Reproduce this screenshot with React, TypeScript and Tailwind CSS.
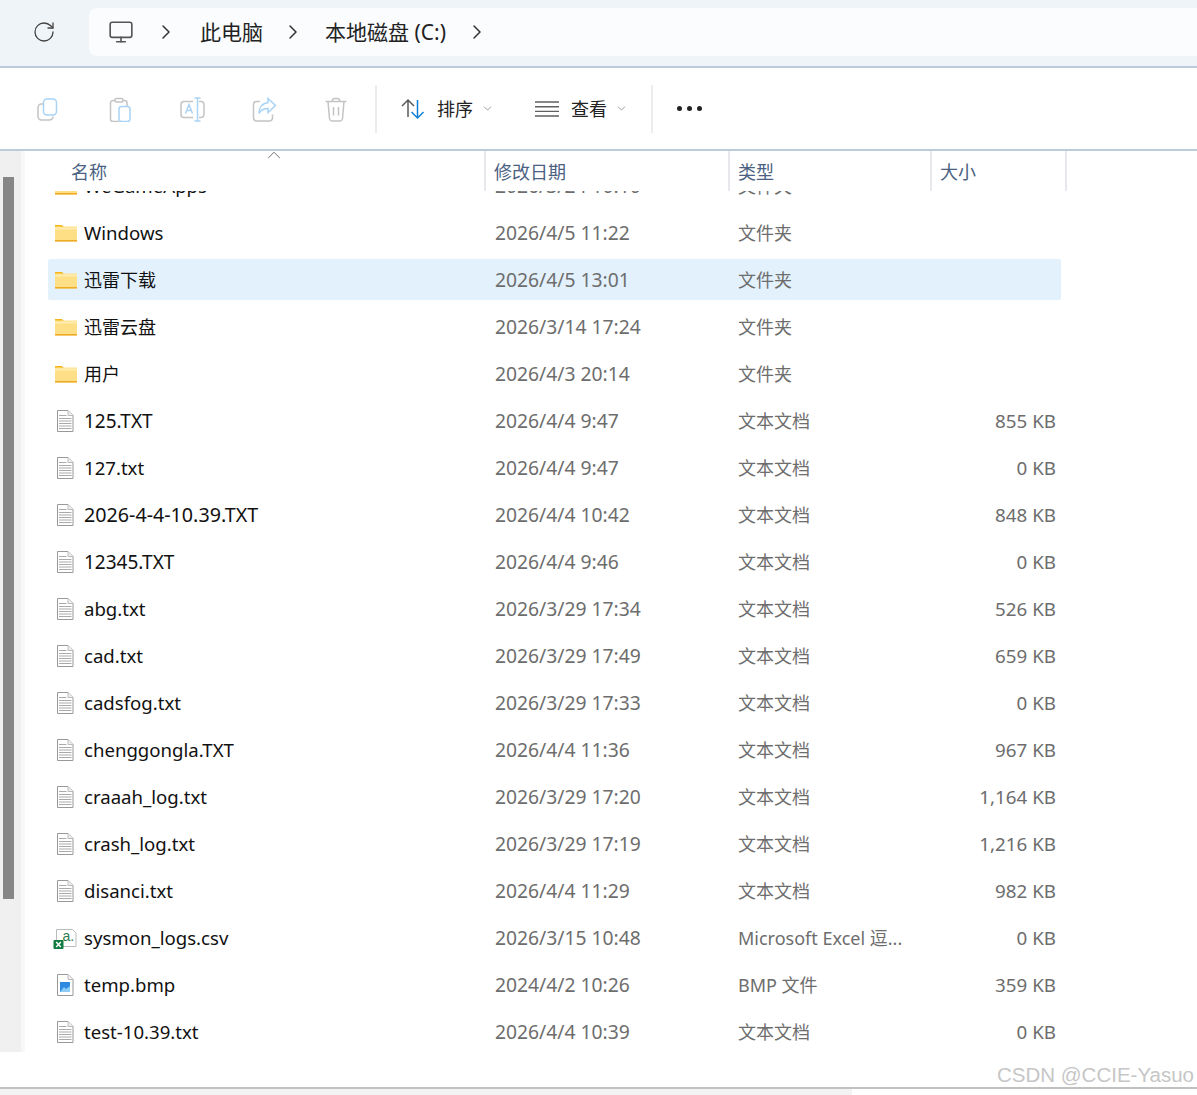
import { ChevronDown, ChevronRight, ChevronUp, Monitor, RotateCw } from "lucide-react";

const font = "font-['Noto_Sans','Noto_Sans_CJK_SC',sans-serif]";

type Kind = "folder" | "txt" | "csv" | "bmp";

const rows: { name: string; date: string; type: string; size?: string; kind: Kind; selected?: boolean; nameClass?: string }[] = [
  { name: "WeGameApps", date: "2026/3/24 10:10", type: "文件夹", kind: "folder" },
  { name: "Windows", date: "2026/4/5 11:22", type: "文件夹", kind: "folder" },
  { name: "迅雷下载", date: "2026/4/5 13:01", type: "文件夹", kind: "folder", selected: true, nameClass: "text-[18px]" },
  { name: "迅雷云盘", date: "2026/3/14 17:24", type: "文件夹", kind: "folder", nameClass: "text-[18px]" },
  { name: "用户", date: "2026/4/3 20:14", type: "文件夹", kind: "folder", nameClass: "text-[18px]" },
  { name: "125.TXT", date: "2026/4/4 9:47", type: "文本文档", size: "855 KB", kind: "txt", nameClass: "text-[19px]" },
  { name: "127.txt", date: "2026/4/4 9:47", type: "文本文档", size: "0 KB", kind: "txt" },
  { name: "2026-4-4-10.39.TXT", date: "2026/4/4 10:42", type: "文本文档", size: "848 KB", kind: "txt", nameClass: "text-[19.7px]" },
  { name: "12345.TXT", date: "2026/4/4 9:46", type: "文本文档", size: "0 KB", kind: "txt", nameClass: "text-[19px]" },
  { name: "abg.txt", date: "2026/3/29 17:34", type: "文本文档", size: "526 KB", kind: "txt" },
  { name: "cad.txt", date: "2026/3/29 17:49", type: "文本文档", size: "659 KB", kind: "txt" },
  { name: "cadsfog.txt", date: "2026/3/29 17:33", type: "文本文档", size: "0 KB", kind: "txt" },
  { name: "chenggongla.TXT", date: "2026/4/4 11:36", type: "文本文档", size: "967 KB", kind: "txt" },
  { name: "craaah_log.txt", date: "2026/3/29 17:20", type: "文本文档", size: "1,164 KB", kind: "txt" },
  { name: "crash_log.txt", date: "2026/3/29 17:19", type: "文本文档", size: "1,216 KB", kind: "txt" },
  { name: "disanci.txt", date: "2026/4/4 11:29", type: "文本文档", size: "982 KB", kind: "txt" },
  { name: "sysmon_logs.csv", date: "2026/3/15 10:48", type: "Microsoft Excel 逗...", size: "0 KB", kind: "csv" },
  { name: "temp.bmp", date: "2024/4/2 10:26", type: "BMP 文件", size: "359 KB", kind: "bmp" },
  { name: "test-10.39.txt", date: "2026/4/4 10:39", type: "文本文档", size: "0 KB", kind: "txt" },
];

function FolderIcon() {
  return (
    <svg width="24" height="20" viewBox="0 0 24 20">
      <path d="M0 2 h7 l2 2 h-9 z" fill="#f5b417" />
      <rect x="0" y="3.500" width="22" height="15" fill="#ffdf85" />
      <rect x="0" y="4.500" width="22" height="2" fill="#ffecb0" />
      <rect x="0" y="17" width="22" height="1.500" fill="#eeaa24" />
    </svg>
  );
}

function DocBase({ children }: { children?: React.ReactNode }) {
  return (
    <svg width="20" height="24" viewBox="0 0 20 24">
      <path d="M2.500 1.500 h10.500 l5 5 v16 h-15.500 z" fill="#fff" stroke="#999" />
      <path d="M13 1.500 v5 h5" fill="#eee" stroke="#bbb" />
      {children}
    </svg>
  );
}

function TxtIcon() {
  return (
    <DocBase>
      <path d="M4 6.500 h7.500 M4 9.500 h12.500 M4 12 h12.500 M4 14.500 h12.500 M4 17 h12.500 M4 19.500 h12.500" stroke="#aaa" strokeWidth="1" />
    </DocBase>
  );
}

function BmpIcon() {
  return (
    <DocBase>
      <rect x="5" y="9" width="10" height="10" fill="#2d8ae0" />
      <path d="M5 19 l4 -5 l2 2 l4 -3 v6 z" fill="#8ccbf5" />
    </DocBase>
  );
}

function CsvIcon() {
  return (
    <svg width="26" height="24" viewBox="0 0 26 24">
      <path d="M3.500 3.500 h16 l3.500 3.500 v13.500 h-19.500 z" fill="#fff" stroke="#bbb" />
      <text x="9.500" y="15" fontSize="14" fill="#2c7a4b" fontFamily="Liberation Sans, sans-serif">a.</text>
      <rect x="0.500" y="14" width="10" height="9" rx="1" fill="#107c41" />
      <path d="M3.200 16 l4.600 5 M7.800 16 l-4.600 5" stroke="#fff" strokeWidth="1.500" />
    </svg>
  );
}

function FileIcon({ kind }: { kind: Kind }) {
  if (kind === "folder") return <FolderIcon />;
  if (kind === "csv") return <CsvIcon />;
  if (kind === "bmp") return <BmpIcon />;
  return <TxtIcon />;
}

const grey = "#c4c4c4";
const blue = "#a9d3f5";

function ToolIcon({ children }: { children: React.ReactNode }) {
  return (
    <div className="flex h-[44px] w-[72px] items-center justify-center">
      <svg width="26" height="26" viewBox="0 0 26 26" fill="none" strokeWidth="1.500">
        {children}
      </svg>
    </div>
  );
}

function Toolbar() {
  return (
    <div className="flex h-[83px] shrink-0 items-center border-b-2 border-[#bdccdb] bg-white pl-[12px]">
      <ToolIcon>
        <path d="M8 8 h-1.500 a3.500 3.500 0 0 0 -3.500 3.500 v9 a3.500 3.500 0 0 0 3.500 3.500 h8 a3.500 3.500 0 0 0 3.500 -3.500" stroke={grey} />
        <rect x="8.500" y="3" width="13" height="16" rx="3.500" stroke={blue} />
      </ToolIcon>
      <ToolIcon>
        <path d="M8 4.500 h-2 a2.500 2.500 0 0 0 -2.500 2.500 v16 a2.500 2.500 0 0 0 2.500 2.500 h6" stroke={grey} />
        <path d="M16 4.500 h1.500 a2.500 2.500 0 0 1 2.500 2.500 v3" stroke={grey} />
        <rect x="8" y="2.500" width="8" height="3.500" rx="1.500" stroke={grey} />
        <rect x="12" y="10.500" width="11" height="15" rx="2.500" stroke={blue} />
      </ToolIcon>
      <ToolIcon>
        <path d="M14 5.500 h-9 a3 3 0 0 0 -3 3 v10 a3 3 0 0 0 3 3 h9" stroke={grey} />
        <path d="M20 5.500 h2 a3 3 0 0 1 3 3 v10 a3 3 0 0 1 -3 3 h-2" stroke={grey} />
        <path d="M6.500 17.500 l3.500 -9 l3.500 9 M8 14.500 h4.500" stroke={blue} />
        <path d="M15.500 2 h6 M18.500 2 v23 M15.500 25 h6" stroke={blue} />
      </ToolIcon>
      <ToolIcon>
        <path d="M9 5.500 h-3.500 a3 3 0 0 0 -3 3 v13.500 a3 3 0 0 0 3 3 h13 a3 3 0 0 0 3 -3 v-3.500" stroke={grey} />
        <path d="M17 2.500 l7.500 7 l-7.500 7 v-4 c-4 0 -7 1 -9 5 c0 -6 3 -10 9 -11 z" stroke={blue} />
      </ToolIcon>
      <ToolIcon>
        <path d="M2.500 5.500 h21 M9.500 5.500 v-1 a2 2 0 0 1 2 -2 h3 a2 2 0 0 1 2 2 v1" stroke={grey} />
        <path d="M5 5.500 l1.500 17 a3 3 0 0 0 3 2.500 h7 a3 3 0 0 0 3 -2.500 l1.500 -17 M10.500 11 v8.500 M15.500 11 v8.500" stroke={grey} />
      </ToolIcon>
      <div className="ml-[3px] h-[48px] w-[2px] bg-[#ececec]" />
      <div className="ml-[23px] flex items-center">
        <svg width="26" height="24" viewBox="0 0 26 24" fill="none" strokeWidth="1.500">
          <path d="M8 20 v-17 M2 9 l6 -6 l6 6" stroke="#5a5a5a" />
          <path d="M17.500 3 v18 M11.500 15 l6 6 l6 -6" stroke="#0f7fd6" />
        </svg>
        <span className="ml-[11px] text-[18px] leading-none text-[#222]">排序</span>
        <ChevronDown className="ml-[8px] text-[#888]" size={13} strokeWidth={1.500} />
      </div>
      <div className="ml-[41px] flex items-center">
        <svg width="24" height="16" viewBox="0 0 24 16" fill="none" stroke="#606060" strokeWidth="1.400">
          <path d="M0 1 h24 M0 5.700 h24 M0 10.400 h24 M0 15 h24" />
        </svg>
        <span className="ml-[12px] text-[18px] leading-none text-[#222]">查看</span>
        <ChevronDown className="ml-[8px] text-[#888]" size={13} strokeWidth={1.500} />
      </div>
      <div className="ml-[23px] h-[48px] w-[2px] bg-[#ececec]" />
      <div className="ml-[24px] flex items-center gap-[5px]">
        <span className="size-[5px] rounded-full bg-[#222]" />
        <span className="size-[5px] rounded-full bg-[#222]" />
        <span className="size-[5px] rounded-full bg-[#222]" />
      </div>
    </div>
  );
}

function AddressBar() {
  const crumb = "text-[21px] leading-none text-[#222]";
  return (
    <div className="flex h-[68px] shrink-0 items-center border-b-2 border-[#bdccdb] bg-[#eff4f9] pb-[2px] pl-[32px]">
      <RotateCw className="text-[#444]" size={24} strokeWidth={1.300} />
      <div className="ml-[33px] flex h-[48px] flex-1 items-center rounded-l-lg bg-[#fafcfe] pl-[19px]">
        <Monitor className="text-[#555]" size={26} strokeWidth={1.500} />
        <ChevronRight className="ml-[20px] text-[#333]" size={24} strokeWidth={1.500} />
        <span className={`ml-[22px] ${crumb}`}>此电脑</span>
        <ChevronRight className="ml-[18px] text-[#333]" size={24} strokeWidth={1.500} />
        <span className={`ml-[20px] ${crumb}`}>本地磁盘 (C:)</span>
        <ChevronRight className="ml-[19px] text-[#333]" size={24} strokeWidth={1.500} />
      </div>
    </div>
  );
}

function ColumnHeader() {
  const cell = "flex h-full items-center border-r-2 border-[#e6e8eb] pt-[2px] text-[18px] text-[#4a6182]";
  return (
    <div className="relative flex h-[40px] shrink-0">
      <ChevronUp className="absolute top-[-7px] left-[238px] text-[#666]" size={22} strokeWidth={1} />
      <div className={`${cell} w-[461px] pl-[46px]`}>名称</div>
      <div className={`${cell} w-[244px] pl-[8px]`}>修改日期</div>
      <div className={`${cell} w-[202px] pl-[8px]`}>类型</div>
      <div className={`${cell} w-[135px] pl-[8px]`}>大小</div>
    </div>
  );
}

function FileRow({ row }: { row: (typeof rows)[number] }) {
  return (
    <div className={`flex h-[41px] w-[1013px] shrink-0 items-center rounded-[2px] ${row.selected ? "bg-[#e3f1fd]" : ""}`}>
      <div className="flex w-[447px] items-center">
        <div className={`flex w-[36px] shrink-0 ${row.kind === "csv" ? "pl-[5px]" : "pl-[7px]"}`}>
          <FileIcon kind={row.kind} />
        </div>
        <span className={`leading-[26px] text-[#111] ${row.nameClass ?? "text-[18.6px]"}`}>{row.name}</span>
      </div>
      <div className="w-[243px] pt-[2px] text-[19.300px] text-[#6d6d6d]">{row.date}</div>
      <div className="w-[165px] pt-[2px] text-[18px] whitespace-nowrap text-[#6d6d6d]">{row.type}</div>
      <div className="w-[153px] pt-[2px] text-right text-[18.800px] text-[#6d6d6d]">{row.size}</div>
    </div>
  );
}

export default function App() {
  return (
    <div className={`relative flex h-[1095px] w-[1197px] flex-col overflow-hidden bg-white ${font}`}>
      <AddressBar />
      <Toolbar />
      <div className="flex h-[901px] shrink-0">
        {/* scrollbar gutter */}
        <div className="flex w-[21px] shrink-0 flex-col bg-[#f0f0f0] pt-[26px] pl-[3px]">
          <div className="h-[722px] w-[11px] bg-[#868686]" />
        </div>
        <div className="w-[4px] shrink-0 bg-[#f8f8f8]" />
        <div className="flex min-w-0 flex-1 flex-col">
          <ColumnHeader />
          <div className="flex-1 overflow-hidden pl-[23px]">
            <div className="-mt-[26px] flex flex-col gap-[6px]">
              {rows.map((row) => (
                <FileRow key={row.name} row={row} />
              ))}
            </div>
          </div>
        </div>
      </div>
      <div className="h-[35px] shrink-0" />
      <div className="h-[2px] shrink-0 bg-[#c0c0c0]" />
      <div className="h-[6px] w-[852px] shrink-0 bg-[#f3f3f3]" />
      <span className="absolute right-[3px] bottom-[10px] font-['Liberation_Sans',sans-serif] text-[20.500px] leading-none text-[#c6c6c6]">
        CSDN @CCIE-Yasuo
      </span>
    </div>
  );
}
